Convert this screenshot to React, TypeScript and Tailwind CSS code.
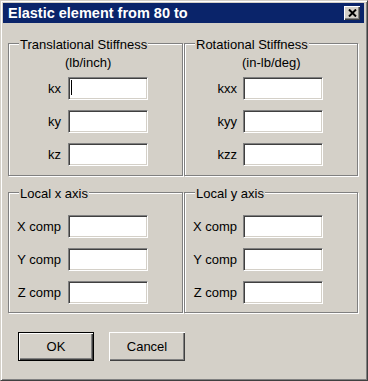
import React from 'react';

type Row = { label: string; caret?: boolean };

const upperLeft: Row[] = [{ label: 'kx', caret: true }, { label: 'ky' }, { label: 'kz' }];
const upperRight: Row[] = [{ label: 'kxx' }, { label: 'kyy' }, { label: 'kzz' }];
const comps: Row[] = [{ label: 'X comp' }, { label: 'Y comp' }, { label: 'Z comp' }];

const raised = 'shadow-[inset_1px_1px_#fff,inset_-1px_-1px_#404040,inset_-2px_-2px_#808080]';

const Field: React.FC<{ caret?: boolean }> = ({ caret }) => (
  <div className="relative w-[80px] h-[23px] bg-white border border-t-[#808080] border-l-[#808080] border-b-white border-r-white shadow-[inset_1px_1px_#404040,inset_-1px_-1px_#d4d0c8]">
    {caret && <span className="absolute left-[2px] top-[2px] w-[1px] h-[15px] bg-black" />}
  </div>
);

const Rows: React.FC<{ rows: Row[]; gap: string }> = ({ rows, gap }) => (
  <div className="flex flex-col gap-[10px]">
    {rows.map(r => (
      <div key={r.label} className={`flex items-center h-[23px] ${gap}`}>
        <span className="w-[52px] text-right whitespace-nowrap">{r.label}</span>
        <Field caret={r.caret} />
      </div>
    ))}
  </div>
);

const Group: React.FC<{ title: string; className: string; children: React.ReactNode }> = ({ title, className, children }) => (
  <div className={`relative border border-[#808080] shadow-[inset_1px_1px_#fff,1px_1px_#fff] ${className}`}>
    <span className="absolute top-[-6px] left-[10px] px-[1px] leading-[14px] bg-[#d4d0c8] whitespace-nowrap">{title}</span>
    {children}
  </div>
);

const App: React.FC = () => {
  return (
    <div className="w-[368px] h-[381px] bg-[#d4d0c8] border border-[#d4d0c8] border-r-[#404040] border-b-[#404040] shadow-[inset_1px_1px_#fff,inset_-1px_-1px_#808080] p-[2px] font-['Liberation_Sans',Arial,sans-serif] text-[13px] text-black">
      <div className="h-[20px] mr-[1px] bg-[#0a246a] flex items-center justify-between pl-[5px] pr-[4px]">
        <span className="text-white font-bold text-[14.5px] leading-[20px] whitespace-nowrap">Elastic element from 80 to</span>
        <div className={`w-[16px] h-[14px] bg-[#d4d0c8] flex items-center justify-center ${raised}`}>
          <svg width="9" height="8" viewBox="0 0 9 8" className="-mt-[1px]">
            <path d="M1 0.5 L8 7.5 M8 0.5 L1 7.5" stroke="#000" strokeWidth="2" />
          </svg>
        </div>
      </div>

      <div className="pl-[5px] pt-[20px]">
        <div className="flex">
          <Group title="Translational Stiffness" className="w-[175px] h-[133px] pt-[12px]">
            <div className="pl-[56px] leading-[14px] h-[14px]">(lb/inch)</div>
            <div className="mt-[7px]">
              <Rows rows={upperLeft} gap="gap-[7px]" />
            </div>
          </Group>
          <Group title="Rotational Stiffness" className="ml-[1px] w-[174px] h-[133px] pt-[12px]">
            <div className="pl-[57px] leading-[14px] h-[14px]">(in-lb/deg)</div>
            <div className="mt-[7px]">
              <Rows rows={upperRight} gap="gap-[6px]" />
            </div>
          </Group>
        </div>

        <div className="flex mt-[16px]">
          <Group title="Local x axis" className="w-[175px] h-[121px] pt-[22px]">
            <Rows rows={comps} gap="gap-[7px]" />
          </Group>
          <Group title="Local y axis" className="ml-[1px] w-[174px] h-[121px] pt-[22px]">
            <Rows rows={comps} gap="gap-[6px]" />
          </Group>
        </div>

        <div className="flex gap-[15px] mt-[19px] ml-[10px]">
          <button className="w-[76px] h-[29px] border border-black bg-[#d4d0c8] shadow-[inset_1px_1px_#fff,inset_-1px_-1px_#404040,inset_-2px_-2px_#808080] text-[13px]">
            OK
          </button>
          <button className={`w-[76px] h-[29px] bg-[#d4d0c8] ${raised} text-[13px]`}>
            Cancel
          </button>
        </div>
      </div>
    </div>
  );
};

export default App;
